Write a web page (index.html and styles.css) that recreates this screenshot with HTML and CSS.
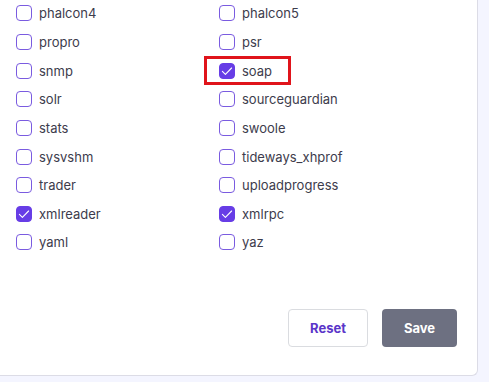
FILE: index.html
```html
<!DOCTYPE html>
<html>
<head>
  <link rel="stylesheet" href="styles.css">
</head>
<body>
  <div class="card">
    <div class="ext-grid">
      <label class="ext"><span class="box"></span>phalcon4</label>
      <label class="ext"><span class="box"></span>phalcon5</label>
      <label class="ext"><span class="box"></span>propro</label>
      <label class="ext"><span class="box"></span>psr</label>
      <label class="ext"><span class="box"></span>snmp</label>
      <label class="ext marked"><span class="box on"><svg viewBox="0 0 16 16"><path d="M3.4 8.4l3 2.9L12.6 5"/></svg></span>soap</label>
      <label class="ext"><span class="box"></span>solr</label>
      <label class="ext"><span class="box"></span>sourceguardian</label>
      <label class="ext"><span class="box"></span>stats</label>
      <label class="ext"><span class="box"></span>swoole</label>
      <label class="ext"><span class="box"></span>sysvshm</label>
      <label class="ext"><span class="box"></span>tideways_xhprof</label>
      <label class="ext"><span class="box"></span>trader</label>
      <label class="ext"><span class="box"></span>uploadprogress</label>
      <label class="ext"><span class="box on"><svg viewBox="0 0 16 16"><path d="M3.4 8.4l3 2.9L12.6 5"/></svg></span>xmlreader</label>
      <label class="ext"><span class="box on"><svg viewBox="0 0 16 16"><path d="M3.4 8.4l3 2.9L12.6 5"/></svg></span>xmlrpc</label>
      <label class="ext"><span class="box"></span>yaml</label>
      <label class="ext"><span class="box"></span>yaz</label>
    </div>
    <div class="actions">
      <button class="btn btn-reset" type="button">Reset</button>
      <button class="btn btn-save" type="button">Save</button>
    </div>
  </div>
</body>
</html>
```

FILE: styles.css
```css
html, body {
  margin: 0;
  background: #f4f5ff;
}
body {
  width: 489px;
  height: 382px;
  overflow: hidden;
  font-family: Inter, "Noto Sans", sans-serif;
  color: #3d3c4c;
}
.card {
  width: 478px;
  height: 376px;
  box-sizing: border-box;
  background: #fff;
  border-right: 1px solid #dcdce6;
  border-bottom: 1px solid #dcdce6;
  border-bottom-right-radius: 6px;
  display: flex;
  flex-direction: column;
}
.ext-grid {
  display: grid;
  grid-template-columns: 203px 1fr;
  grid-auto-rows: 28.65px;
  padding-left: 16px;
  margin-top: -1px;
}
.ext {
  display: flex;
  align-items: center;
  gap: 7px;
  font-size: 13px;
  position: relative;
}
.box {
  width: 16px;
  height: 16px;
  box-sizing: border-box;
  border: 1.5px solid #7a5be0;
  border-radius: 4px;
  display: flex;
  align-items: center;
  justify-content: center;
}
.box.on {
  background: #673de6;
  border-color: #673de6;
}
.box svg {
  width: 16px;
  height: 16px;
  flex: none;
  fill: none;
  stroke: #fff;
  stroke-width: 1.1;
  stroke-linecap: round;
  stroke-linejoin: round;
}
.marked::after {
  content: "";
  position: absolute;
  left: -15px;
  top: 0;
  width: 87px;
  height: 29px;
  box-sizing: border-box;
  border: 3px solid #e0141b;
}
.actions {
  margin-top: auto;
  display: flex;
  justify-content: flex-end;
  gap: 14px;
  padding: 0 20px 28px 0;
}
.btn {
  height: 38px;
  border-radius: 4px;
  font-family: Inter, "Noto Sans", sans-serif;
  font-size: 13px;
  font-weight: 700;
}
.btn-reset {
  width: 80px;
  background: #fff;
  border: 1px solid #dadce0;
  color: #5a35c9;
}
.btn-save {
  width: 75px;
  background: #6d7081;
  border: none;
  color: #fff;
}
```
